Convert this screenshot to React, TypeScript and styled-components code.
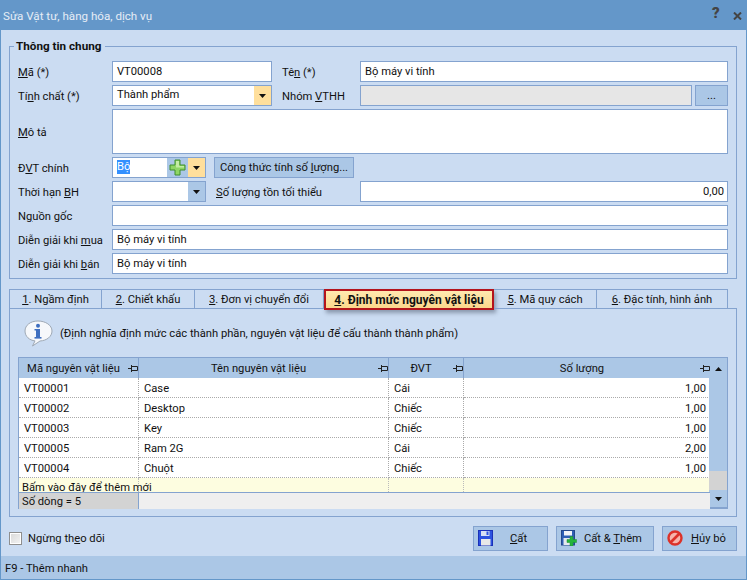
import styled, { createGlobalStyle } from "styled-components";

const COLORS = {
  title: "#6497c9",
  body: "#cbdcf2",
  line: "#84a3cf",
  blue: "#abc7e6",
  yellow: "#ffdf9c",
  text: "#111",
};

const rows = [
  { ma: "VT00001", ten: "Case", dvt: "Cái", sl: "1,00" },
  { ma: "VT00002", ten: "Desktop", dvt: "Chiếc", sl: "1,00" },
  { ma: "VT00003", ten: "Key", dvt: "Chiếc", sl: "1,00" },
  { ma: "VT00005", ten: "Ram 2G", dvt: "Cái", sl: "2,00" },
  { ma: "VT00004", ten: "Chuột", dvt: "Chiếc", sl: "1,00" },
];

const GlobalStyle = createGlobalStyle`
  html, body { margin: 0; padding: 0; }
  body { font-family: Roboto, "Liberation Sans", Arial, sans-serif; font-size: 11.2px; color: ${COLORS.text}; }
  * { box-sizing: border-box; }
`;

function Arrow({ up }: { up?: boolean }) {
  return (
    <svg width="7" height="4" viewBox="0 0 7 4">
      <path d={up ? "M0 4h7L3.500 0z" : "M0 0h7L3.500 4z"} fill="#111" />
    </svg>
  );
}

function Pin() {
  return (
    <svg width="10" height="7" viewBox="0 0 10 7">
      <path d="M0 3.500h3M3.500 0v7M3.500 1.500h6v4h-6" stroke="#222" fill="none" />
    </svg>
  );
}

function CloseMark() {
  return (
    <svg width="9" height="8" viewBox="0 0 9 8">
      <path d="M1 .5l7 7M8 .5l-7 7" stroke="#444" strokeWidth="2" />
    </svg>
  );
}

function PlusIcon() {
  return (
    <svg width="17" height="17" viewBox="0 0 17 17">
      <path d="M6 1h5v5h5v5h-5v5H6v-5H1V6h5z" fill="#8fd664" stroke="#3e8e2c" />
      <path d="M7 2h3v5h5v1.500H7z" fill="#c4eca4" />
    </svg>
  );
}

function InfoIcon() {
  return (
    <svg width="29" height="27" viewBox="0 0 29 27">
      <path d="M14 1C6.500 1 1 5.200 1 11c0 5.500 4.500 9.300 10 9.900L8.500 26 16 21c6.800-.4 12-4.500 12-10C28 5.200 21.500 1 14 1z" fill="#f6f8fb" stroke="#9fa9b5" />
      <rect x="12" y="9" width="4" height="8.500" fill="#3f6fc0" />
      <rect x="10.500" y="17" width="7" height="1.600" fill="#3f6fc0" />
      <rect x="10.500" y="9" width="3" height="1.500" fill="#3f6fc0" />
      <circle cx="14" cy="5.800" r="2" fill="#3f6fc0" />
    </svg>
  );
}

function SaveIcon() {
  return (
    <svg width="15" height="16" viewBox="0 0 15 16">
      <rect x=".5" y=".5" width="14" height="15" fill="#2b52e0" stroke="#1a30b8" />
      <rect x="3" y="1" width="8.500" height="5" fill="#d7e0f4" />
      <rect x="8.500" y="1.500" width="2" height="3.500" fill="#2b52e0" />
      <rect x="3" y="9" width="9.500" height="6.500" fill="#e8e8e8" />
    </svg>
  );
}

function SavePlusIcon() {
  return (
    <svg width="16" height="16" viewBox="0 0 16 16">
      <rect x=".5" y=".5" width="13" height="14.500" fill="#2f5fb5" stroke="#24488c" />
      <rect x="3" y="1" width="8" height="4.500" fill="#f2f4f8" />
      <rect x="2.500" y="8" width="7" height="7" fill="#e4e8ee" />
      <path d="M9 6.500h3v3h3.500v3H12V16H9v-3.500H6v-3h3z" fill="#25b53a" stroke="#1d8f2d" strokeWidth=".5" />
    </svg>
  );
}

function CancelIcon() {
  return (
    <svg width="16" height="16" viewBox="0 0 16 16">
      <circle cx="8" cy="8" r="6.500" fill="#f7b4ab" stroke="#dc3229" strokeWidth="2.400" />
      <path d="M3.500 12.500l9-9" stroke="#dc3229" strokeWidth="2.600" />
    </svg>
  );
}

export default function App() {
  return (
    <Window>
      <GlobalStyle />
      <TitleBar>
        <TitleText>Sửa Vật tư, hàng hóa, dịch vụ</TitleText>
        <TitleHelp>?</TitleHelp>
        <CloseMark />
      </TitleBar>

      <Body>
        <Group>
          <GroupTitle>Thông tin chung</GroupTitle>
          <Row>
            <Label><span><u>M</u>ã (*)</span></Label>
            <Input $w={160}>VT00008</Input>
            <SideLabel><span>Tê<u>n</u> (*)</span></SideLabel>
            <Input>Bộ máy vi tính</Input>
          </Row>
          <Row>
            <Label><span>Tí<u>n</u>h chất (*)</span></Label>
            <Combo $w={160}>
              <ComboText>Thành phẩm</ComboText>
              <DropButton $hot><Arrow /></DropButton>
            </Combo>
            <SideLabel><span>Nhóm <u>V</u>THH</span></SideLabel>
            <Input $disabled />
            <DotsButton>...</DotsButton>
          </Row>
          <Row $h={45}>
            <Label><span><u>M</u>ô tả</span></Label>
            <Input />
          </Row>
          <Row>
            <Label><span>Đ<u>V</u>T chính</span></Label>
            <Combo $w={94}>
              <ComboText><Selected>Bộ</Selected></ComboText>
              <PlusButton><PlusIcon /></PlusButton>
              <DropButton $hot><Arrow /></DropButton>
            </Combo>
            <FormulaButton><span>Công thức tính số <u>l</u>ượng...</span></FormulaButton>
          </Row>
          <Row>
            <Label><span>Thời hạn <u>B</u>H</span></Label>
            <Combo $w={94}>
              <ComboText />
              <DropButton><Arrow /></DropButton>
            </Combo>
            <StockLabel><span><u>S</u>ố lượng tồn tối thiểu</span></StockLabel>
            <Input $right>0,00</Input>
          </Row>
          <Row>
            <Label><span>N<u>g</u>uồn gốc</span></Label>
            <Input />
          </Row>
          <Row>
            <Label><span>Diễn giải khi <u>m</u>ua</span></Label>
            <Input>Bộ máy vi tính</Input>
          </Row>
          <Row>
            <Label><span>Diễn giải khi <u>b</u>án</span></Label>
            <Input>Bộ máy vi tính</Input>
          </Row>
        </Group>

        <Tabs>
          <Tab $w={93}><span><u>1</u>. Ngầm định</span></Tab>
          <Tab $w={93}><span><u>2</u>. Chiết khấu</span></Tab>
          <Tab $w={129}><span><u>3</u>. Đơn vị chuyển đổi</span></Tab>
          <ActiveTab><span><u>4</u>. Định mức nguyên vật liệu</span></ActiveTab>
          <Tab $w={103}><span><u>5</u>. Mã quy cách</span></Tab>
          <Tab $w={131}><span><u>6</u>. Đặc tính, hình ảnh</span></Tab>
        </Tabs>

        <Panel>
          <Hint>
            <InfoIcon />
            <span>(Định nghĩa định mức các thành phần, nguyên vật liệu để cấu thành thành phẩm)</span>
          </Hint>
          <Grid>
            <TableArea>
              <HeadCell>Mã nguyên vật liệu<PinSlot><Pin /></PinSlot></HeadCell>
              <HeadCell>Tên nguyên vật liệu<PinSlot><Pin /></PinSlot></HeadCell>
              <HeadCell>ĐVT<PinSlot><Pin /></PinSlot></HeadCell>
              <HeadCell>Số lượng<PinSlot><Pin /></PinSlot></HeadCell>
              {rows.map((r) => (
                <DataRow key={r.ma}>
                  <Cell>{r.ma}</Cell>
                  <Cell>{r.ten}</Cell>
                  <Cell>{r.dvt}</Cell>
                  <Cell $right>{r.sl}</Cell>
                </DataRow>
              ))}
              <NewRow>
                <NewCell>Bấm vào đây để thêm mới</NewCell>
                <NewCell />
                <NewCell />
                <NewCell />
              </NewRow>
              <FootRow>
                <FootCount>Số dòng = 5</FootCount>
                <FootRest />
              </FootRow>
            </TableArea>
            <ScrollBar>
              <ScrollCap $h={21}><Arrow up /></ScrollCap>
              <ScrollTrack />
              <ScrollEnd />
              <ScrollCap $h={17}><Arrow /></ScrollCap>
            </ScrollBar>
          </Grid>
        </Panel>

        <Actions>
          <CheckLabel>
            <CheckBox />
            <span>Ngừng th<u>e</u>o dõi</span>
          </CheckLabel>
          <ActionButton $w={75} $gap={17}><SaveIcon /><span><u>C</u>ất</span></ActionButton>
          <ActionButton $w={98} $gap={7}><SavePlusIcon /><span>Cất &amp; <u>T</u>hêm</span></ActionButton>
          <ActionButton $w={75} $gap={8}><CancelIcon /><span><u>H</u>ủy bỏ</span></ActionButton>
        </Actions>
      </Body>

      <StatusBar>F9 - Thêm nhanh</StatusBar>
    </Window>
  );
}

const Window = styled.div`
  width: 747px;
  height: 580px;
  display: flex;
  flex-direction: column;
  background: ${COLORS.body};
  border: 1px solid ${COLORS.title};
  border-top: 0;
  overflow: hidden;
`;

const TitleBar = styled.div`
  height: 30px;
  flex: none;
  display: flex;
  align-items: center;
  padding: 2px 5px 0 3px;
  margin: 0 -1px;
  background: ${COLORS.title};
`;

const TitleText = styled.span`
  flex: 1;
  font-size: 11.6px;
  color: #e6edf6;
`;

const TitleHelp = styled.span`
  width: 21px;
  color: #444;
  font-weight: 900;
  font-size: 15px;
  line-height: 15px;
  margin-bottom: 5px;
`;

const Body = styled.div`
  flex: 1;
  display: flex;
  flex-direction: column;
  padding: 9px 9px 0 8px;
`;

const Group = styled.fieldset`
  margin: 0;
  min-width: 0;
  height: 240px;
  padding: 7px 8px 0 8px;
  display: flex;
  flex-direction: column;
  gap: 3px;
  border: 1px solid ${COLORS.line};
`;

const GroupTitle = styled.legend`
  padding: 0 4px 0 2px;
  margin-left: -4px;
  font-weight: bold;
  font-size: 11.7px;
  line-height: 15px;
  color: #111;
`;

const Row = styled.div<{ $h?: number }>`
  height: ${(p) => p.$h ?? 21}px;
  flex: none;
  display: flex;
  align-items: stretch;
`;

const Label = styled.label`
  width: 94px;
  flex: none;
  display: flex;
  align-items: center;
  white-space: pre;
  padding-top: 1px;
`;

const SideLabel = styled(Label)`
  width: 78px;
  margin-left: 10px;
`;

const StockLabel = styled(Label)`
  width: 144px;
  margin-left: 10px;
`;

const Input = styled.div<{ $w?: number; $disabled?: boolean; $right?: boolean }>`
  ${(p) => (p.$w ? `width: ${p.$w}px; flex: none;` : "flex: 1; min-width: 0;")}
  display: flex;
  align-items: center;
  justify-content: ${(p) => (p.$right ? "flex-end" : "flex-start")};
  padding: 0 3px 0 4px;
  background: ${(p) => (p.$disabled ? "#e6e6e6" : "#fff")};
  border: 1px solid ${COLORS.line};
`;

const Combo = styled.div<{ $w: number }>`
  width: ${(p) => p.$w}px;
  flex: none;
  display: flex;
  background: #fff;
  border: 1px solid ${COLORS.line};
`;

const ComboText = styled.div`
  flex: 1;
  padding: 0 0 2px 4px;
  display: flex;
  align-items: center;
`;

const Selected = styled.span`
  background: #3390ff;
  color: #fff;
  line-height: 14px;
`;

const DropButton = styled.div<{ $hot?: boolean }>`
  width: 17px;
  flex: none;
  display: flex;
  align-items: center;
  justify-content: center;
  background: ${(p) => (p.$hot ? COLORS.yellow : COLORS.blue)};
`;

const PlusButton = styled.div`
  width: 21px;
  flex: none;
  display: flex;
  align-items: center;
  justify-content: center;
  background: ${COLORS.blue};
`;

const DotsButton = styled.div`
  width: 33px;
  flex: none;
  margin-left: 3px;
  display: flex;
  align-items: flex-end;
  justify-content: center;
  padding-bottom: 3px;
  line-height: 12px;
  background: ${COLORS.blue};
  border: 1px solid ${COLORS.line};
`;

const FormulaButton = styled.div`
  width: 140px;
  flex: none;
  margin-left: 8px;
  display: flex;
  align-items: center;
  justify-content: center;
  white-space: pre;
  background: ${COLORS.blue};
  border: 1px solid ${COLORS.line};
`;

const Tabs = styled.div`
  flex: none;
  display: flex;
  align-items: flex-start;
  height: 19px;
  margin-top: 10px;
  width: 719px;
  position: relative;
  z-index: 1;
`;

const Tab = styled.div<{ $w: number }>`
  width: ${(p) => p.$w}px;
  height: 20px;
  flex: none;
  display: flex;
  align-items: center;
  justify-content: center;
  white-space: pre;
  border: 1px solid ${COLORS.line};
  border-left: 0;
  &:first-child {
    border-left: 1px solid ${COLORS.line};
  }
`;

const ActiveTab = styled.div`
  width: 170px;
  height: 21px;
  flex: none;
  display: flex;
  align-items: center;
  justify-content: center;
  white-space: pre;
  font-weight: bold;
  font-size: 12px;
  color: #111;
  background: linear-gradient(#ffe9b0, #fbd78c);
  border: 2px solid #b4141c;
  box-shadow: 2px 3px 4px rgba(60, 70, 90, 0.45);
`;

const Panel = styled.div`
  height: 209px;
  flex: none;
  display: flex;
  flex-direction: column;
  padding: 0 8px 0 8px;
  border: 1px solid ${COLORS.line};
`;

const Hint = styled.div`
  height: 48px;
  flex: none;
  display: flex;
  align-items: center;
  gap: 7px;
  padding: 0 0 0 6px;
  white-space: pre;
`;

const Grid = styled.div`
  display: flex;
  height: 152px;
  flex: none;
  border: 1px solid ${COLORS.line};
  border-bottom-width: 2px;
`;

const TableArea = styled.div`
  flex: 1;
  min-width: 0;
  display: grid;
  grid-template-columns: 120px 250px 75px 246px;
  grid-template-rows: 20px repeat(5, 20px) 14px 17px;
  background: #fff;
`;

const HeadCell = styled.div`
  display: flex;
  align-items: center;
  justify-content: center;
  padding-right: 10px;
  position: relative;
  background: ${COLORS.blue};
  border-right: 1px solid ${COLORS.line};
  &:nth-child(4) {
    border-right: 0;
  }
`;

const PinSlot = styled.span`
  position: absolute;
  right: 0;
  top: 7px;
  line-height: 0;
`;

const DataRow = styled.div`
  display: contents;
`;

const Cell = styled.div<{ $right?: boolean }>`
  display: flex;
  align-items: center;
  justify-content: ${(p) => (p.$right ? "flex-end" : "flex-start")};
  padding: 1px 3px 0 5px;
  border-right: 1px dotted #aaa;
  border-bottom: 1px dotted #aaa;
`;

const NewRow = styled.div`
  display: contents;
`;

const NewCell = styled.div`
  padding: 3px 0 0 3px;
  white-space: nowrap;
  background: #fdfde0;
  border-right: 1px dotted #bbb;
  &:nth-child(4n + 1) {
    position: relative;
    z-index: 1;
  }
`;

const FootRow = styled.div`
  grid-column: 1 / -1;
  display: grid;
  grid-template-columns: 120px 1fr;
  border-top: 1px solid ${COLORS.line};
  position: relative;
  z-index: 2;
  background: #efefef;
`;

const FootCount = styled.div`
  display: flex;
  align-items: center;
  padding-left: 3px;
  background: #d3d3d3;
  border-right: 1px solid ${COLORS.line};
`;

const FootRest = styled.div`
  background: #efefef;
`;

const ScrollBar = styled.div`
  width: 18px;
  flex: none;
  display: flex;
  flex-direction: column;
  background: ${COLORS.blue};
`;

const ScrollCap = styled.div<{ $h: number }>`
  height: ${(p) => p.$h}px;
  flex: none;
  display: flex;
  align-items: center;
  justify-content: center;
`;

const ScrollTrack = styled.div`
  flex: 1;
`;

const ScrollEnd = styled.div`
  height: 19px;
  flex: none;
  background: #d3d3d3;
`;

const Actions = styled.div`
  flex: none;
  height: 39px;
  padding-top: 3px;
  display: flex;
  align-items: center;
  gap: 8px;
`;

const CheckLabel = styled.label`
  flex: 1;
  display: flex;
  align-items: center;
  gap: 6px;
  white-space: pre;
`;

const CheckBox = styled.span`
  width: 13px;
  height: 13px;
  flex: none;
  background: linear-gradient(135deg, #d8d8d8, #f4f4f4);
  border: 1px solid #8e8e8e;
  box-shadow: inset 0 0 0 1px #fff;
`;

const ActionButton = styled.div<{ $w: number; $gap: number }>`
  width: ${(p) => p.$w}px;
  height: 25px;
  flex: none;
  display: flex;
  align-items: center;
  gap: ${(p) => p.$gap}px;
  padding-left: 4px;
  white-space: pre;
  background: ${COLORS.blue};
  border: 1px solid ${COLORS.line};
`;

const StatusBar = styled.div`
  height: 24px;
  flex: none;
  display: flex;
  align-items: center;
  padding-left: 4px;
  background: ${COLORS.blue};
`;
